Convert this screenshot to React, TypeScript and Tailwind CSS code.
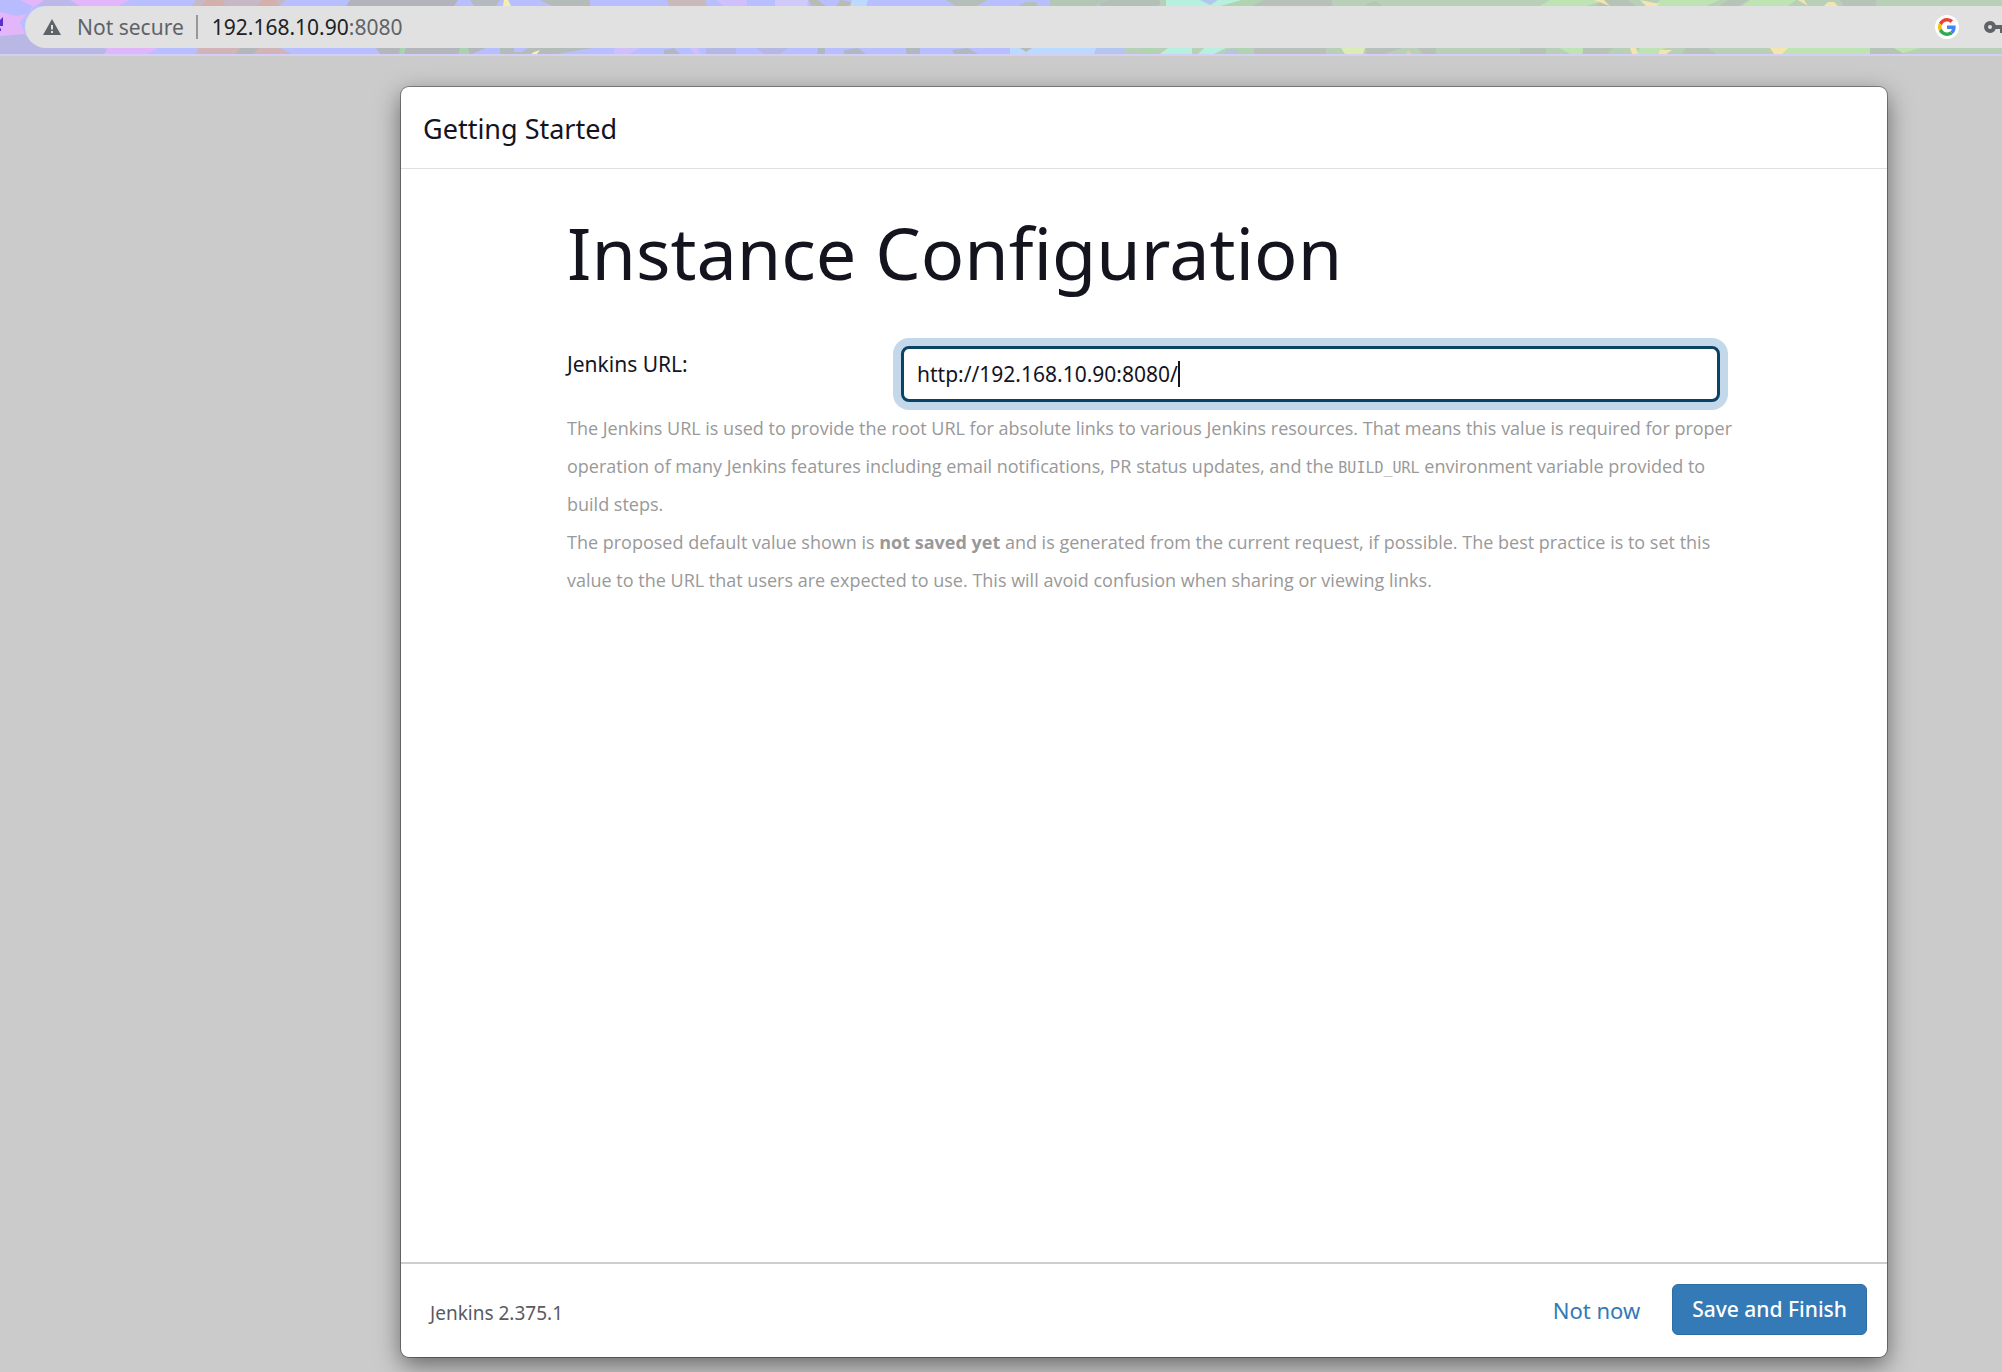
import { useEffect, useRef, useState } from 'react';

function ThemeStrip() {
  return (
    <svg
      className="absolute inset-0 h-full w-full"
      viewBox="0 0 2002 54"
      preserveAspectRatio="xMinYMin slice"
      aria-hidden="true"
    >
      <rect width="2002" height="54" fill="#b8bfff" />

      {/* Pink and violet blobs */}
      <path d="M0 0h130l-12 6H34L20 22l6 14-6 10-20-8z" fill="#e3b6fb" />
      <path d="M0 0h20l12 6-4 8-12 2-16-4z" fill="#b9bbff" />
      <path d="M0 36l24-2 20 14 60 0 6 6H0z" fill="#b9b8e4" />
      <path d="M44 0h26l10 6H36z" fill="#bcb9ea" />
      <path d="M108 48h50l-10 6h-44zM120 48l12 0-14 6h-10z" fill="#e0b6fb" />
      <path d="M196 0h90l-6 6h-88z" fill="#c6b8c4" />
      <path d="M206 0h16l4 6h-24zM262 0h14l2 6h-22z" fill="#d3b0ac" />
      <path d="M198 48h82l12 6H196z" fill="#d0b4b8" />

      {/* Grey foliage */}
      <path d="M350 0h108l-4 6H346z" fill="#b2b3bb" />
      <path d="M376 48h80l30 0-14 6h-92zM240 48h18l-4 6h-18z" fill="#b3b6ba" />
      <path d="M400 48h6l-2 6h-5zM460 48h8l2 6h-12z" fill="#abd2b0" />
      <path d="M470 0h30l-4 6h-22z" fill="#b5bac0" />
      <path d="M504 0h4l3 6h-8z" fill="#f5f0a8" />
      <path d="M540 0h50v6h-38z" fill="#b3bcb8" />
      <path d="M500 48h92l-36 6h-56z" fill="#b3bcb8" />
      <path d="M514 48h14l-6 4h-8z" fill="#b8bfff" />
      <path d="M534 52l6-2-3 4h-6z" fill="#fbf3a8" />

      {/* Middle: blue with orange, lilac and olive */}
      <path d="M667 0h38l2 6h-38z" fill="#c9b9ba" />
      <path d="M716 0l12 0 4 6h-8zM727 0h20v6h-22z" fill="#cfc0fb" />
      <path d="M775 0h34l-2 6h-32z" fill="#d0c9fb" />
      <path d="M808 0l10 0 8 6h-14zM840 0l18 3-10 3h-12z" fill="#b9bbb4" />
      <path d="M852 0h16l-2 6h-16z" fill="#bcdafd" />
      <path d="M615 48h24l-10 6h-16zM690 48h8l2 6h-6z" fill="#cfc0fb" />
      <path d="M664 50l10-2 6 6h-16zM818 48h7v6h-8zM844 50l14-2 8 6h-22zM906 48h14v6h-14z" fill="#b1b9c0" />
      <path d="M706 48h30v6h-30zM756 48h32l-8 6h-16z" fill="#b4b8e2" />
      <path d="M946 0h42l-12 6h-20z" fill="#b3bfb8" />
      <path d="M952 50l16-2 10 6h-24z" fill="#b1b9c0" />

      {/* Light blue into green */}
      <path d="M1010 48h116l-6 6H1010z" fill="#bcdafd" />
      <path d="M1020 48h12l-6 4z" fill="#b3bcb8" />
      <path d="M1096 48h30v6h-32z" fill="#b4c6ee" />
      <path d="M1018 6l8-4 10 0 2 4zM1100 0h64l-6 6h-58z" fill="#b3c0b8" />
      <path d="M1050 0h60l-16 6h-44z" fill="#b2c7b4" />
      <path d="M1160 0h842v6h-842zM1125 48h877v6h-877z" fill="#b8cfb8" />
      <path d="M1166 0h76l-22 6h-54z" fill="#b8f0e0" />
      <path d="M1200 0h18l-8 5z" fill="#b4c6ee" />
      <path d="M1168 48h24v6h-32zM1204 48h22l-12 6h-16z" fill="#b8f0e0" />
      <path d="M1226 50l12-2 4 6h-18z" fill="#b4c6d8" />
      <path d="M1242 0h22l-16 6h-24zM1142 48h18l-8 6h-12zM1236 48h12l6 6h-14z" fill="#b0d4b0" />
      <path d="M1264 0h68v6h-80zM1254 48h72v6h-72z" fill="#b7c1ba" />
      <path d="M1341 48h24l-2 6h-18z" fill="#dcecb6" />
      <path d="M1366 48h36l-18 6h-18zM1418 48h18v6h-14z" fill="#b7c1ba" />
      <path d="M1408 50l4 4h-6z" fill="#e2cfae" />
      <path d="M1366 4l10-3 6 5h-16z" fill="#b0c8b4" />

      {/* Green leaves with yellow tips */}
      <path d="M1550 0h56l-20 6h-46zM1660 0h60l-14 6h-52zM1750 0h46l-8 6h-46z" fill="#bfe4b4" />
      <path d="M1560 48h24l-2 6h-12zM1640 48h26l-10 6h-20zM1770 48h150l-20 6h-120z" fill="#bfe4b4" />
      <path d="M1604 0h24l8 6h-40zM1728 0h20l-10 6h-18zM1840 0h36v6h-32z" fill="#b5c4b6" />
      <path d="M1520 48h26v6h-26zM1583 48h30l-6 6h-24zM1686 48h22l8 6h-34zM1870 48h24l10 6h-34z" fill="#b5c4b6" />
      <path d="M1594 0h10l6 6zM1640 0l20 4-4 2h-10zM1798 0h6l4 6zM1828 2h6l4 4h-14z" fill="#f4e5ae" />
      <path d="M1630 48h6l2 6h-6zM1770 48l18 0-6 6h-8zM1660 50h12l-6 4h-8z" fill="#f4e5ae" />
    </svg>
  );
}

function WarningIcon() {
  return (
    <svg className="h-4 w-[18px] shrink-0" viewBox="0 0 18 16" aria-hidden="true">
      <path d="M9 0 18 16H0z" fill="#5f6368" />
      <path d="M8 6h2v4.500H8zM8 12h2v2H8z" fill="#e1e1e1" />
    </svg>
  );
}

function GoogleIcon() {
  return (
    <svg className="size-[18px]" viewBox="0 0 48 48" aria-hidden="true">
      <path fill="#EA4335" d="M24 9.500c3.540 0 6.710 1.220 9.210 3.600l6.850-6.850C35.900 2.380 30.470 0 24 0 14.620 0 6.510 5.380 2.560 13.220l7.980 6.190C12.430 13.720 17.740 9.500 24 9.500z" />
      <path fill="#4285F4" d="M46.980 24.550c0-1.570-.15-3.090-.38-4.550H24v9.020h12.940c-.58 2.960-2.260 5.480-4.780 7.180l7.730 6c4.510-4.180 7.090-10.360 7.090-17.650z" />
      <path fill="#FBBC05" d="M10.530 28.590c-.48-1.450-.76-2.990-.76-4.590s.27-3.140.76-4.590l-7.980-6.190C.92 16.460 0 20.120 0 24s.92 7.540 2.560 10.780l7.970-6.190z" />
      <path fill="#34A853" d="M24 48c6.480 0 11.930-2.130 15.890-5.810l-7.730-6c-2.150 1.450-4.920 2.300-8.160 2.300-6.260 0-11.570-4.220-13.470-9.910l-7.980 6.190C6.510 42.620 14.620 48 24 48z" />
    </svg>
  );
}

function KeyIcon() {
  return (
    <svg className="h-3 w-[22px] shrink-0" viewBox="0 0 22 12" aria-hidden="true">
      <path
        fillRule="evenodd"
        d="M6 0a6 6 0 0 1 5.700 4H22v4h-2v4h-4V8h-4.300A6 6 0 1 1 6 0zm0 4a2 2 0 1 0 0 4 2 2 0 0 0 0-4z"
        fill="#5f6368"
      />
    </svg>
  );
}

function AddressBar() {
  return (
    <header className="relative flex h-14 overflow-hidden border-b-2 border-[#d5cff6] py-1.5">
      <ThemeStrip />
      {/* Tail of the reload arrow */}
      <svg className="relative mt-2.5 h-4 w-[25px] shrink-0" viewBox="0 0 25 16" aria-hidden="true">
        <path d="M0 4l3-3v9H0zM0 13l1-1v3H0z" fill="#5a2fd0" />
      </svg>
      <div className="relative flex h-[42px] flex-1 items-center rounded-l-full bg-[#e1e1e1] pl-[18px] text-[21px] leading-8">
        <WarningIcon />
        <span className="ml-4 text-[#5f6368]">Not secure</span>
        <span className="ml-3 h-6 w-0.5 bg-[#96999c]" />
        <span className="ml-3.5 text-[#5f6368]">
          <span className="text-[#202124]">192.168.10.90</span>:8080
        </span>
        <button
          type="button"
          aria-label="Google"
          className="ml-auto flex size-6 items-center justify-center rounded-full bg-white"
        >
          <GoogleIcon />
        </button>
        <button type="button" aria-label="Saved passwords" className="-mr-1 ml-[25px]">
          <KeyIcon />
        </button>
      </div>
    </header>
  );
}

export default function App() {
  const [url, setUrl] = useState('http://192.168.10.90:8080/');
  const [caretLeft, setCaretLeft] = useState(0);
  const inputRef = useRef<HTMLInputElement>(null);

  useEffect(() => {
    inputRef.current?.focus();
  }, []);

  // Keep the drawn caret at the end of the typed text
  useEffect(() => {
    const input = inputRef.current;
    const ctx = document.createElement('canvas').getContext('2d');
    if (!input || !ctx) return;

    const style = getComputedStyle(input);
    ctx.font = `${style.fontSize} ${style.fontFamily}`;
    const start = parseFloat(style.paddingLeft) + parseFloat(style.borderLeftWidth);
    setCaretLeft(Math.round(start + ctx.measureText(url).width));
  }, [url]);

  return (
    <div className="flex min-h-screen flex-col overflow-hidden bg-[#cbcbcb] font-['Noto_Sans',sans-serif] text-[#14141f]">
      <AddressBar />

      <main className="mt-[31px] mr-[115px] mb-[15px] ml-[401px] flex flex-1 flex-col rounded-lg bg-white shadow-[0_0_0_1px_rgba(0,0,0,0.35),0_8px_24px_rgba(0,0,0,0.5)]">
        <div className="border-b border-[#e0e0e0] px-[22px] pt-[22px] pb-[19px]">
          <h4 className="text-[27px] leading-10">Getting Started</h4>
        </div>

        <form id="instance-form" className="flex-1 pt-[43px] pr-[143px] pl-[166px]">
          <h1 className="text-[72px] leading-[80px]">Instance Configuration</h1>

          <div className="mt-[54px] mr-6 flex items-start">
            <label htmlFor="root-url" className="mt-1 w-[334px] shrink-0 text-[21px] leading-7">
              Jenkins URL:
            </label>
            <div className="relative min-w-0 flex-1">
              <input
                ref={inputRef}
                id="root-url"
                type="text"
                value={url}
                onChange={(e) => setUrl(e.target.value)}
                className="block h-14 w-full rounded-lg border-3 border-[#0b4366] bg-white px-[13px] text-[21px] caret-transparent shadow-[0_0_0_8px_#c3d9e9] outline-none"
              />
              <span
                className="pointer-events-none absolute top-[15px] h-[26px] w-0.5 bg-[#14141f]"
                style={{ left: caretLeft }}
              />
            </div>
          </div>

          <div className="mt-[7px] font-['Open_Sans',sans-serif] text-[18px] leading-[38px] text-[#999999]">
            <p>
              The Jenkins URL is used to provide the root URL for absolute links to various Jenkins resources. That means this value is required for proper
              operation of many Jenkins features including email notifications, PR status updates, and the{' '}
              <code className="font-['DejaVu_Sans_Mono',monospace] text-[15px] leading-none">BUILD_URL</code> environment variable provided to build steps.
            </p>
            <p>
              The proposed default value shown is <strong>not saved yet</strong> and is generated from the current request, if possible. The best practice is to set this
              value to the URL that users are expected to use. This will avoid confusion when sharing or viewing links.
            </p>
          </div>
        </form>

        <footer className="flex h-[95px] items-center border-t-2 border-[#cfcfcf] pr-5 pb-0.5 pl-[29px]">
          <span className="mt-1.5 text-[19px] leading-7 text-[#5a5a62]">Jenkins 2.375.1</span>
          <button type="button" className="ml-auto px-8 text-[22px] leading-8 text-[#337ab7]">
            Not now
          </button>
          <button
            type="submit"
            form="instance-form"
            className="h-[51px] rounded-md border border-[#2e6da4] bg-[#337ab7] px-[19px] text-[21px] font-medium text-white"
          >
            Save and Finish
          </button>
        </footer>
      </main>
    </div>
  );
}
